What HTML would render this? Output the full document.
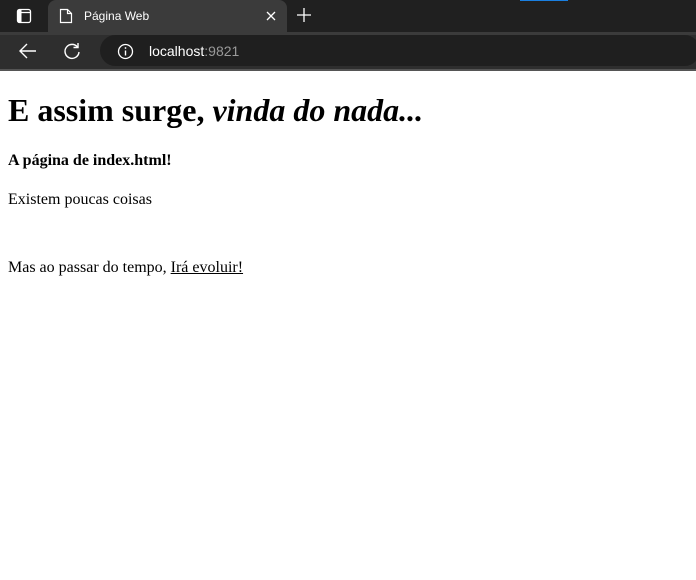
<!DOCTYPE html>
<html><head><style>
*{box-sizing:border-box}
html,body{margin:0;padding:0;width:696px;height:580px;overflow:hidden;background:#fff}
#chrome{position:absolute;left:0;top:0;width:696px;height:71px;background:#202020;font-family:"Liberation Sans",sans-serif}
#tab{position:absolute;left:48px;top:0;width:239px;height:34px;background:#3b3b3b;border-radius:8px 8px 0 0}
#tb{position:absolute;left:0;top:32px;width:696px;height:38px;background:#2e2e2e;border-top:3px solid #3b3b3b}
#addr{position:absolute;left:100px;top:35px;width:600px;height:31px;background:#1f1f1f;border-radius:16px}
#line{position:absolute;left:0;top:69px;width:696px;height:2px;background:#555}
#page{position:absolute;top:71px;left:0;width:696px;font-family:"Liberation Serif",serif;color:#000;font-size:16px}
#page .in{margin:8px}
h1{font-size:32px;margin:21px 0}
p{margin:16px 0}
p.b{margin:23px 0 21px}
a{color:#000}
</style></head><body>
<div id="chrome">
<div style="position:absolute;left:520px;top:0;width:48px;height:1px;background:#1a7fe0"></div>
<svg style="position:absolute;left:16px;top:8px" width="16" height="16"><rect x="1.5" y="1.5" width="13" height="13" rx="2" fill="none" stroke="#fff" stroke-width="1.3"/><rect x="2" y="2" width="3.5" height="12" fill="#fff"/><line x1="2" y1="4.5" x2="14" y2="4.5" stroke="#fff" stroke-width="1.3"/></svg>
<div id="tab">
<svg style="position:absolute;left:11px;top:8px" width="14" height="16"><path d="M1.5 1.5h7l4 4v9h-11z M8.5 1.5v4h4" fill="none" stroke="#fff" stroke-width="1.2"/></svg>
<span style="position:absolute;left:36px;top:9px;color:#fff;font-size:12px">Página Web</span>
<svg style="position:absolute;left:218px;top:11px" width="10" height="10"><path d="M1 1L9 9M9 1L1 9" stroke="#fff" stroke-width="1.3"/></svg>
</div>
<svg style="position:absolute;left:296px;top:7px" width="16" height="16"><path d="M8 1v14M1 8h14" stroke="#fff" stroke-width="1.3"/></svg>
<div id="tb"></div>
<svg style="position:absolute;left:18px;top:42px" width="20" height="18"><path d="M18 9H3M9 2L2 9l7 7" fill="none" stroke="#fff" stroke-width="1.4"/></svg>
<svg style="position:absolute;left:62px;top:41px" width="20" height="20"><path d="M15.5 6A7 7 0 1 0 17 11" fill="none" stroke="#fff" stroke-width="1.4"/><path d="M16 2v4.5h-4.5" fill="none" stroke="#fff" stroke-width="1.4"/></svg>
<div id="addr"></div>
<svg style="position:absolute;left:117px;top:43px" width="17" height="17"><circle cx="8.5" cy="8.5" r="7" fill="none" stroke="#fff" stroke-width="1.3"/><path d="M8.5 7.5v5" stroke="#fff" stroke-width="1.4"/><circle cx="8.5" cy="5" r="0.9" fill="#fff"/></svg>
<span style="position:absolute;left:149px;top:43px;font-size:14px;color:#fff">localhost<span style="color:#9a9a9a">:9821</span></span>
<div id="line"></div>
</div>
<div id="page"><div class="in">
<h1>E assim surge, <i>vinda do nada...</i></h1>
<p class="b"><b>A página de index.html!</b></p>
<p>Existem poucas coisas</p>
<br>
<p>Mas ao passar do tempo, <a href="#">Irá evoluir!</a></p>
</div></div>
</body></html>
